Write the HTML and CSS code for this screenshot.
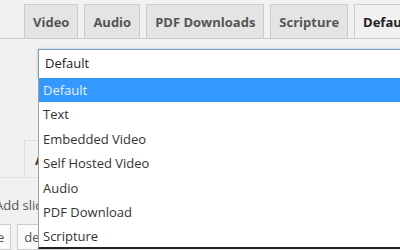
FILE: index.html
```html
<!DOCTYPE html>
<html lang="en">
<head>
    <meta charset="UTF-8">
    <title>Slide Settings</title>
    <link rel="stylesheet" href="styles.css">
</head>
<body>
    <div class="tabs">
        <div class="tab">Video</div>
        <div class="tab">Audio</div>
        <div class="tab">PDF Downloads</div>
        <div class="tab">Scripture</div>
        <div class="tab active">Default</div>
    </div>

    <div class="panel">
        <div class="field">
            <div class="select">Default</div>
            <ul class="options">
                <li class="selected">Default</li>
                <li>Text</li>
                <li>Embedded Video</li>
                <li>Self Hosted Video</li>
                <li>Audio</li>
                <li>PDF Download</li>
                <li>Scripture</li>
            </ul>
        </div>

        <div class="inner-tab">A</div>
        <div class="rule"></div>

        <div class="add-slide">Add slide</div>

        <div class="buttons">
            <span class="small-btn">e</span>
            <span class="small-btn">delete</span>
        </div>
    </div>
</body>
</html>
```

FILE: styles.css
```css
* {
    margin: 0;
    padding: 0;
    box-sizing: border-box;
}

body {
    background: #f1f1f1;
    font-family: 'Open Sans', 'Noto Sans', sans-serif;
    font-size: 13px;
    color: #444;
    overflow: hidden;
    width: 400px;
    height: 250px;
}

.tabs {
    display: flex;
    padding: 4px 0 0 24px;
    border-bottom: 1px solid #ccc;
    height: 39px;
    white-space: nowrap;
    overflow: hidden;
}

.tab {
    flex-shrink: 0;
    margin-right: 6px;
    padding: 0 8px;
    height: 35px;
    line-height: 34px;
    font-weight: 700;
    font-size: 13px;
    color: #555;
    background: #e4e4e4;
    border: 1px solid #ccc;
    border-bottom: none;
}

.tab.active {
    background: #f1f1f1;
    color: #222;
    margin-bottom: -1px;
    height: 36px;
}

.panel {
    position: relative;
    height: 211px;
}

.field {
    position: relative;
    padding: 10px 0 0 38px;
}

.select {
    width: 380px;
    height: 29px;
    line-height: 27px;
    padding-left: 6px;
    font-size: 13px;
    background: #fff;
    border: 1px solid #7e9bbd;
    border-bottom: none;
    color: #222;
    box-shadow: 0 0 2px rgba(30, 140, 190, 0.5);
}

.options {
    position: absolute;
    top: 39px;
    left: 38px;
    width: 380px;
    height: 171px;
    list-style: none;
    background: #fff;
    border-left: 1px solid #a0a0a0;
    border-bottom: 2px solid #222;
    z-index: 2;
}

.options li {
    height: 24.4px;
    line-height: 24px;
    padding-left: 4px;
    font-size: 13px;
    color: #333;
}

.options li.selected {
    background: #3399ff;
    color: #e6f0ff;
}

.inner-tab {
    position: absolute;
    top: 101px;
    left: 24px;
    width: 40px;
    height: 37px;
    line-height: 38px;
    padding-left: 10px;
    border: 1px solid #ddd;
    border-bottom: none;
    background: #f1f1f1;
    font-weight: 700;
    color: #333;
}

.rule {
    position: absolute;
    top: 138px;
    left: 0;
    width: 60px;
    border-top: 1px solid #e2e2e2;
}

.add-slide {
    position: absolute;
    top: 155px;
    left: -5px;
    line-height: 22px;
    font-size: 13px;
    color: #555;
    white-space: nowrap;
}

.buttons {
    position: absolute;
    top: 185px;
    left: -10px;
    display: flex;
    gap: 6px;
}

.small-btn {
    display: block;
    height: 26px;
    line-height: 24px;
    padding: 0 6px;
    border: 1px solid #ccc;
    background: #fafafa;
    color: #555;
    font-size: 13px;
}
```
